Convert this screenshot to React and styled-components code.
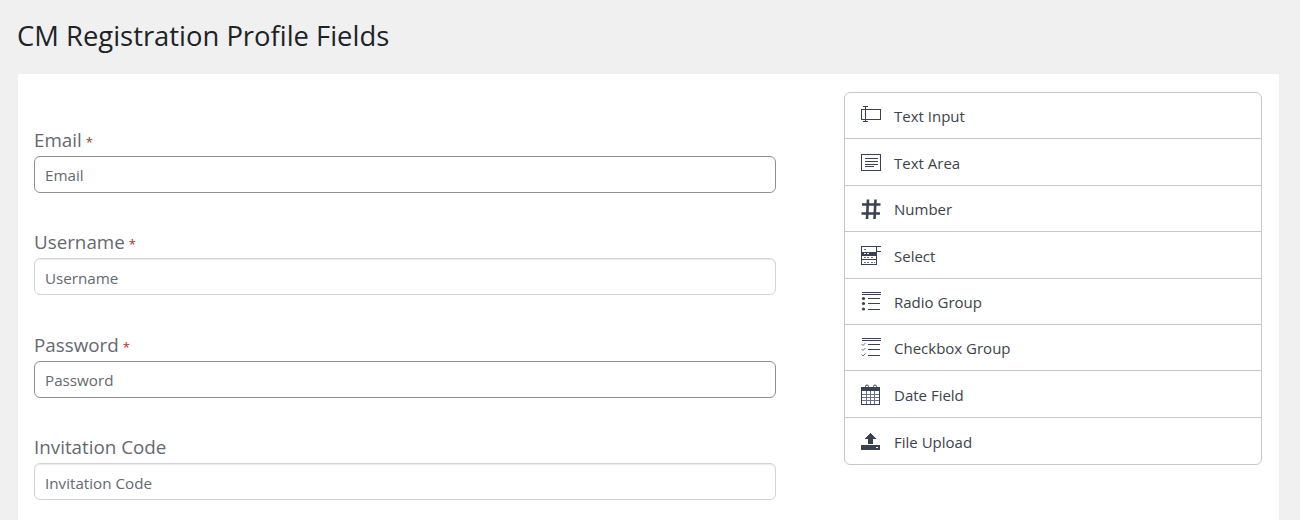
import React from 'react';
import styled, { createGlobalStyle } from 'styled-components';

const Global = createGlobalStyle`
  html, body { margin: 0; padding: 0; background: #f0f0f1; height: 520px; overflow: hidden; }
  body { font-family: "Open Sans", "Noto Sans", sans-serif; color: #3c434a; }
`;

const Page = styled.div`
  padding: 14px 21px 0 18px;
  height: 520px;
  box-sizing: border-box;
  overflow: hidden;
`;
const Title = styled.h1`
  margin: 0 0 0 -1px;
  height: 46px;
  font-size: 27.4px;
  line-height: 44px;
  font-weight: 400;
  color: #1d2327;
`;
const Panel = styled.div`
  margin-top: 14px;
  background: #fff;
  display: flex;
  align-items: flex-start;
  padding: 18px 17px 40px 16px;
  height: 520px;
  box-sizing: border-box;
`;
const Form = styled.div`
  width: 742px;
  margin-right: 68px;
  padding-top: 35px;
  display: flex;
  flex-direction: column;
  gap: 36.45px;
`;
const Field = styled.div`
  display: flex;
  flex-direction: column;
  gap: 3px;
`;
const Label = styled.label`
  font-size: 18.8px;
  line-height: 26.4px;
  height: 26px;
  color: #646970;
`;
const Star = styled.span`
  color: #b32d2e;
  font-size: 13px;
  margin-left: 4px;
`;
const Input = styled.input`
  box-sizing: border-box;
  width: 100%;
  height: 37px;
  padding: ${p => (p.$dark ? '0.8px 10px 0' : '2px 10px 0')};
  border: 1px solid ${p => (p.$dark ? '#8c8f94' : '#ced4da')};
  border-radius: 6px;
  background: #fff;
  box-shadow: ${p => (p.$dark ? 'none' : 'inset 0 1px 1px rgba(0, 0, 0, 0.075)')};
  font-family: inherit;
  font-size: 15.2px;
  color: #646970;
  outline: none;
  &::placeholder { color: #646970; opacity: 1; }
`;
const List = styled.ul`
  list-style: none;
  margin: 0;
  padding: 0;
  width: 418px;
  box-sizing: border-box;
  border: 1px solid #c8c8c8;
  border-radius: 6px;
  background: #fff;
`;
const Row = styled.li`
  box-sizing: border-box;
  height: 46.4px;
  display: flex;
  align-items: center;
  padding: 1.6px 0 0 15px;
  gap: 13px;
  font-size: 15px;
  color: #3c434a;
  border-bottom: 1px solid #c8c8c8;
  &:first-child { padding-top: 0; }
  &:last-child { border-bottom: none; }
`;
const IconBox = styled.svg`
  width: 21px;
  height: 21px;
  flex: none;
  fill: none;
  stroke: #3a4152;
  stroke-width: 1;
  shape-rendering: crispEdges;
`;
const Smooth = styled.g`
  shape-rendering: auto;
`;
const SolidDots = styled.g`
  shape-rendering: auto;
  fill: #3a4152;
  stroke: none;
`;
const Faint = styled.g`
  stroke: #6b7180;
`;
const Thick = styled.g`
  shape-rendering: auto;
  stroke-width: 2.6;
`;
const Solid = styled.path`
  fill: #3a4152;
  stroke: none;
`;
const Cut = styled.path`
  stroke: #fff;
`;

const icons = {
  text: (<>
    <rect x="1.5" y="4.5" width="19" height="10" />
    <path d="M5.5 2v15M3 1.5h5M3 16.5h5" />
  </>),
  area: (<>
    <rect x="1.5" y="2.5" width="19" height="16" />
    <path d="M5 6.5h13M5 9.5h13M5 12.5h13M5 14.5h9" />
  </>),
  number: (
    <Thick>
      <path d="M8 0.5L7 20M15.5 0.5L14.5 20M2 5.5h18.5M1.5 14.5h18.5" />
    </Thick>
  ),
  select: (<>
    <rect x="1.5" y="1.5" width="15" height="18" />
    <rect x="16.5" y="1.5" width="5" height="5" />
    <Solid d="M1.5 6.5h15v4h-15z" />
    <path d="M1.5 14.5h15" />
    <Faint>
      <path d="M3.5 4.5h2M3.5 12.5h2M7 12.5h2M10.5 12.5h2M3.5 17h2M7 17h2M10.5 17h2M13.5 17h1" />
    </Faint>
    <Cut d="M3.5 8.5h2M7 8.5h2" />
  </>),
  radio: (<>
    <path d="M1.5 0.5h19M1.5 2.5h19M8 6.5h12M8 11.5h12M8 17.5h12" />
    <SolidDots>
      <circle cx="3.5" cy="6.5" r="1.6" />
      <circle cx="3.5" cy="11.5" r="1.6" />
      <circle cx="3.5" cy="17" r="1.6" />
    </SolidDots>
  </>),
  check: (<>
    <path d="M1.5 0.5h19M1.5 2.5h19M8 6.5h12M8 11.5h12M8 17.5h12" />
    <Smooth>
      <Faint>
        <path d="M1.5 6l1.5 1.5L5.5 5M1.5 11l1.5 1.5L5.5 10M1.5 16.5l1.5 1.5 2.5-2.5" />
      </Faint>
    </Smooth>
  </>),
  date: (<>
    <rect x="1.5" y="3.5" width="18" height="17" />
    <Solid d="M1.5 3.5h18v3.5h-18z" />
    <Smooth>
      <path d="M5.5 5V2.5a1.5 1.5 0 0 1 3 0V5M13.5 5V2.5a1.5 1.5 0 0 1 3 0V5" />
    </Smooth>
    <Faint>
      <path d="M6.5 7v13M10.5 7v13M14.5 7v13M2 10.5h17M2 13.5h17M2 16.5h17" />
    </Faint>
  </>),
  upload: (<>
    <Solid d="M1 14h19v5H1z" />
    <Solid d="M10.5 2l5.5 5.5h-3.2V13H8.2V7.5H5z" />
    <Cut d="M16 16.5h2" />
  </>),
};

const items = [
  ['text', 'Text Input'], ['area', 'Text Area'], ['number', 'Number'], ['select', 'Select'],
  ['radio', 'Radio Group'], ['check', 'Checkbox Group'], ['date', 'Date Field'], ['upload', 'File Upload'],
];
const fields = [
  ['Email', true, true], ['Username', true, false], ['Password', true, true], ['Invitation Code', false, false],
];

export default function App() {
  return (
    <Page>
      <Global />
      <Title>CM Registration Profile Fields</Title>
      <Panel>
        <Form>
          {fields.map(([name, req, dark]) => (
            <Field key={name}>
              <Label>{name}{req && <Star>*</Star>}</Label>
              <Input placeholder={name} $dark={dark} readOnly />
            </Field>
          ))}
        </Form>
        <List>
          {items.map(([k, t]) => (
            <Row key={k}>
              <IconBox viewBox="0 0 21 21">{icons[k]}</IconBox>
              {t}
            </Row>
          ))}
        </List>
      </Panel>
    </Page>
  );
}
